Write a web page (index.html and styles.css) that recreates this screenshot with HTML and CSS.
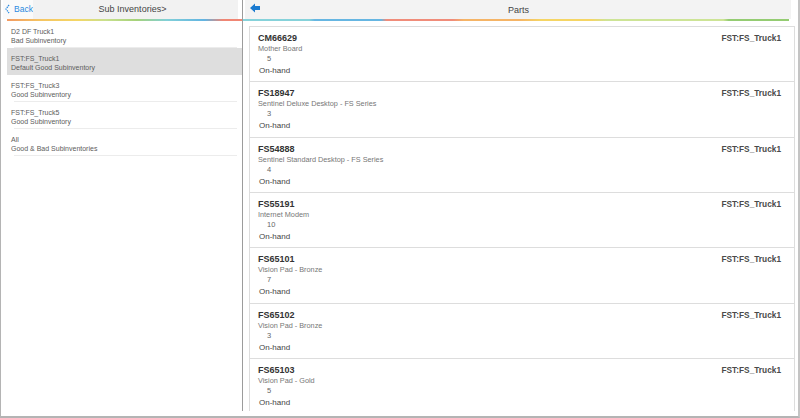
FILE: index.html
```html
<!DOCTYPE html>
<html>
<head>
<meta charset="utf-8">
<link rel="stylesheet" href="styles.css">
</head>
<body>
<div class="frame">
  <div class="main">
    <section class="left">
      <header class="lhead">
        <div class="back">
          <svg class="chev" width="5" height="10" viewBox="0 0 5 10"><polyline points="4,1 1,5 4,9" fill="none" stroke="#2a8ae0" stroke-width="1.3" stroke-dasharray="1.4 0.8"/></svg>
          <span>Back</span>
        </div>
        <div class="ltitle">Sub Inventories&gt;</div>
        <div class="lpad"></div>
      </header>
      <div class="bar lbar"></div>
      <ul class="subs">
        <li class="sub"><div class="l1">D2 DF Truck1</div><div class="l2">Bad Subinventory</div></li>
        <li class="sub sel"><div class="l1">FST:FS_Truck1</div><div class="l2">Default Good Subinventory</div></li>
        <li class="sub"><div class="l1">FST:FS_Truck3</div><div class="l2">Good Subinventory</div></li>
        <li class="sub"><div class="l1">FST:FS_Truck5</div><div class="l2">Good Subinventory</div></li>
        <li class="sub"><div class="l1">All</div><div class="l2">Good &amp; Bad Subinventories</div></li>
      </ul>
    </section>
    <div class="divider"></div>
    <section class="right">
      <header class="rhead">
        <svg class="arrow" width="10" height="10" viewBox="0 0 10 10"><path d="M0 5 L5 0.5 L5 3 L10 3 L10 7 L5 7 L5 9.5 Z" fill="#1a7ad0"/></svg>
        <div class="rtitle">Parts</div>
      </header>
      <div class="bar rbar"></div>
      <div class="cards">
        <div class="card"><div class="top"><span class="pid">CM66629</span><span class="loc">FST:FS_Truck1</span></div><div class="desc">Mother Board</div><div class="qty">5</div><div class="oh">On-hand</div></div>
        <div class="card"><div class="top"><span class="pid">FS18947</span><span class="loc">FST:FS_Truck1</span></div><div class="desc">Sentinel Deluxe Desktop - FS Series</div><div class="qty">3</div><div class="oh">On-hand</div></div>
        <div class="card"><div class="top"><span class="pid">FS54888</span><span class="loc">FST:FS_Truck1</span></div><div class="desc">Sentinel Standard Desktop - FS Series</div><div class="qty">4</div><div class="oh">On-hand</div></div>
        <div class="card"><div class="top"><span class="pid">FS55191</span><span class="loc">FST:FS_Truck1</span></div><div class="desc">Internet Modem</div><div class="qty">10</div><div class="oh">On-hand</div></div>
        <div class="card"><div class="top"><span class="pid">FS65101</span><span class="loc">FST:FS_Truck1</span></div><div class="desc">Vision Pad - Bronze</div><div class="qty">7</div><div class="oh">On-hand</div></div>
        <div class="card"><div class="top"><span class="pid">FS65102</span><span class="loc">FST:FS_Truck1</span></div><div class="desc">Vision Pad - Bronze</div><div class="qty">3</div><div class="oh">On-hand</div></div>
        <div class="card"><div class="top"><span class="pid">FS65103</span><span class="loc">FST:FS_Truck1</span></div><div class="desc">Vision Pad - Gold</div><div class="qty">5</div><div class="oh">On-hand</div></div>
      </div>
    </section>
  </div>
</div>
</body>
</html>
```
FILE: styles.css
```css
* { box-sizing: border-box; }
html, body { margin: 0; padding: 0; background: #fff; }
body { font-family: "Liberation Sans", Arial, sans-serif; color: #444; }

.frame {
  width: 800px;
  height: 418px;
  border-left: 1px solid #b4b4b4;
  border-right: 2px solid #c4c4c4;
  border-bottom: 2px solid #b4b4b4;
  padding-bottom: 5px;
  overflow: hidden;
}
.main { display: flex; height: 411px; overflow: hidden; }

/* left pane */
.left { width: 241px; flex-shrink: 0; padding-left: 6px; display: flex; flex-direction: column; }
.lhead { height: 19px; flex-shrink: 0; display: flex; align-items: stretch; }
.back { width: 30px; flex-shrink: 0; display: flex; align-items: center; color: #2a8ae0; font-size: 8.5px; background: #fafafa; padding-bottom: 2px; margin-left: -4px; padding-left: 2px; }
.chev { flex-shrink: 0; margin-right: 4px; }
.ltitle { flex: 1; background: #f2f2f2; font-size: 9px; color: #444; text-align: center; line-height: 19px; padding-right: 6px; }
.lpad { width: 4px; flex-shrink: 0; }

.bar { height: 2px; flex-shrink: 0; }
.lbar { background: linear-gradient(90deg, #f29a62 0%, #f5c462 14%, #f4d766 30%, #c8e08e 42%, #a6d27a 55%, #82d0d8 68%, #62b4e2 84%, #f08674 92%, #f08674 100%); }
.rbar { background: linear-gradient(90deg, #86d2da 0%, #86d2da 12%, #66b6e2 13%, #66b6e2 25%, #f08c7a 26%, #f08c7a 38%, #f5b466 40%, #f5b466 50%, #f5d564 54%, #f5d564 63%, #cde496 66%, #cde496 87%, #94cc72 88%, #94cc72 99%, #fff 99%); }

.subs { list-style: none; margin: 0; padding: 0; }
.sub { height: 27px; padding: 6px 0 0 4px; position: relative; font-size: 7px; line-height: 9px; color: #5c5c5c; }
.sub::after { content: ""; position: absolute; left: 7px; right: 5px; bottom: 0; border-bottom: 1px solid #ececec; }
.sub.sel { background: #dedede; }
.sub.sel::after { display: none; }

.divider { width: 1px; flex-shrink: 0; background: #9c9c9c; }

/* right pane */
.right { flex: 1; display: flex; flex-direction: column; padding: 0 3px 0 0; }
.rhead { height: 19px; flex-shrink: 0; display: flex; align-items: center; background: #f3f3f3; margin-left: 2px; margin-right: 4px; }
.arrow { flex-shrink: 0; margin-left: 5px; margin-top: -4px; }
.rtitle { flex: 1; text-align: center; font-size: 9px; color: #444; margin-right: 14px; }

.cards { flex-shrink: 0; margin: 5px 0 0 6px; border-top: 1px solid #dddddd; }
.card { height: 55.33px; border: 1px solid #dddddd; border-top: none; padding: 5px 13px 0 8px; }
.top { display: flex; justify-content: space-between; align-items: baseline; line-height: 12px; }
.pid { font-size: 9px; font-weight: bold; color: #333; }
.loc { font-size: 8.3px; font-weight: bold; color: #4a4a4a; }
.desc { font-size: 7.3px; line-height: 10px; color: #777; }
.qty { font-size: 7.5px; line-height: 10px; color: #666; padding-left: 9px; }
.oh { font-size: 8px; line-height: 12px; color: #444; padding-left: 1px; margin-top: 1px; }
```
